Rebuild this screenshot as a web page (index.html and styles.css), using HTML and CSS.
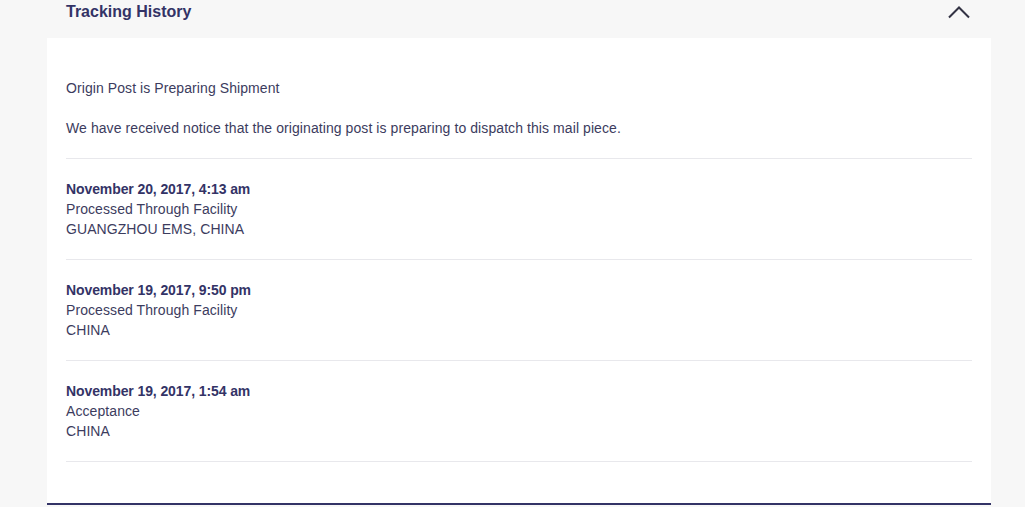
FILE: index.html
```html
<!DOCTYPE html>
<html>
<head>
<meta charset="utf-8">
<link rel="stylesheet" href="styles.css">
</head>
<body>
<div class="page">
  <div class="header">
    <h2 class="title">Tracking History</h2>
    <svg class="chevron" width="22" height="14" viewBox="0 0 22 14"><polyline points="1,12.5 11,2.5 21,12.5" fill="none" stroke="#333344" stroke-width="2"/></svg>
  </div>
  <div class="card">
    <div class="intro">
      <p class="line">Origin Post is Preparing Shipment</p>
      <p class="line gap">We have received notice that the originating post is preparing to dispatch this mail piece.</p>
    </div>
    <div class="event">
      <p class="line date">November 20, 2017, 4:13 am</p>
      <p class="line">Processed Through Facility</p>
      <p class="line">GUANGZHOU EMS, CHINA</p>
    </div>
    <div class="event">
      <p class="line date">November 19, 2017, 9:50 pm</p>
      <p class="line">Processed Through Facility</p>
      <p class="line">CHINA</p>
    </div>
    <div class="event">
      <p class="line date">November 19, 2017, 1:54 am</p>
      <p class="line">Acceptance</p>
      <p class="line">CHINA</p>
    </div>
  </div>
</div>
</body>
</html>
```
FILE: styles.css
```css
html, body {
  margin: 0;
  padding: 0;
  background: #f7f7f7;
}
body {
  font-family: "Liberation Sans", Arial, sans-serif;
  color: #333366;
}
.page {
  width: 944px;
  margin-left: 47px;
  padding-bottom: 10px;
}
.header {
  height: 38px;
  display: flex;
  align-items: flex-start;
  justify-content: space-between;
  padding: 0 20px 0 19px;
}
.title {
  margin: 3px 0 0 0;
  font-size: 16px;
  font-weight: bold;
  line-height: 17px;
  color: #333366;
}
.chevron {
  margin-top: 5px;
  margin-right: 1px;
}
.card {
  background: #ffffff;
  padding: 20px 19px 41px 19px;
  border-bottom: 2px solid #333366;
}
.intro, .event {
  padding: 20px 0;
  border-bottom: 1px solid #e8e8ec;
}
.line {
  margin: 0;
  font-size: 14px;
  line-height: 20px;
  letter-spacing: 0.08px;
  color: #3c3c5e;
}
.gap {
  margin-top: 20px;
}
.date {
  color: #333366;
  font-weight: bold;
  letter-spacing: -0.1px;
}
```
